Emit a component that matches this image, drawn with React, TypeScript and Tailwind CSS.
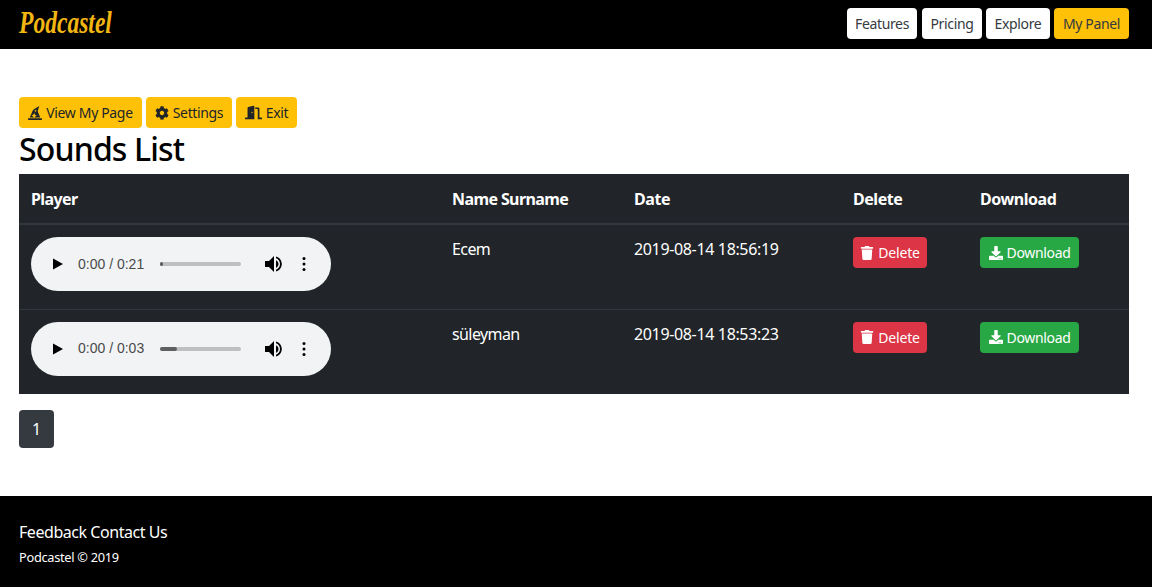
import { FaCog, FaDoorOpen, FaDownload, FaHatWizard, FaTrash } from 'react-icons/fa';

const FONT = "font-['Noto_Sans','Open_Sans',sans-serif]";

const navLinks = [
  { label: 'Features', width: 'mr-px w-[70px]', bg: 'bg-white' },
  { label: 'Pricing', width: 'w-[60px]', bg: 'bg-white' },
  { label: 'Explore', width: 'w-[64px]', bg: 'bg-white' },
  { label: 'My Panel', width: 'w-[75px]', bg: 'bg-[#ffc107]' },
];

const sounds = [
  { name: 'Ecem', date: '2019-08-14 18:56:19', time: '0:00 / 0:21', progress: 'w-[3px]' },
  { name: 'süleyman', date: '2019-08-14 18:53:23', time: '0:00 / 0:03', progress: 'w-[17px]' },
];

function AudioPlayer({ time, progress }: { time: string; progress: string }) {
  return (
    <div className="flex h-[54px] w-[300px] items-center rounded-[27px] bg-[#f1f3f4] font-['Liberation_Sans',sans-serif] text-[#4a4a4a]">
      <svg viewBox="0 0 12 14" className="ml-[21px] h-[14px] w-[12px] fill-black">
        <path d="M1 1.500v11l10-5.500z" />
      </svg>
      <span className="ml-[14px] w-[82px] text-[14px] whitespace-nowrap">{time}</span>
      <div className="h-1 w-[81px] rounded-sm bg-[#bfbfbf]">
        <div className={`h-1 rounded-sm bg-[#5f5f5f] ${progress}`} />
      </div>
      <svg viewBox="0 0 18 18" className="ml-[23px] h-[18px] w-[18px] fill-black">
        <path d="M1 6v6h4l5 5V1L5 6z" />
        <path d="M12 5.200v7.600c1.500-.7 2.500-2.200 2.500-3.800S13.500 5.900 12 5.200z" />
        <path d="M12 1.500v1.800c2.400.8 4 3 4 5.700s-1.600 4.900-4 5.700v1.800c3.400-.8 5.800-3.900 5.800-7.500S15.400 2.300 12 1.500z" />
      </svg>
      <svg viewBox="0 0 4 16" className="ml-[20px] h-4 w-1 fill-black">
        <circle cx="2" cy="2.500" r="1.500" />
        <circle cx="2" cy="8" r="1.500" />
        <circle cx="2" cy="13.500" r="1.500" />
      </svg>
    </div>
  );
}

export default function App() {
  return (
    <div className={`${FONT} min-h-[587px] bg-white text-[#212529]`}>
      {/* Navbar */}
      <nav className="flex h-[49px] items-center justify-between bg-black pr-[23px] pl-[19px]">
        <span className="mb-[2px] origin-left scale-x-[0.76] font-['Liberation_Serif',serif] text-[31px] font-bold text-[#f2b612] italic">
          Podcastel
        </span>
        <div className="mb-[2px] flex gap-1">
          {navLinks.map((link) => (
            <a
              key={link.label}
              className={`flex h-[31px] items-center justify-center rounded-[4px] text-[14px] tracking-[-0.35px] text-[#343a40] ${link.width} ${link.bg}`}
            >
              {link.label}
            </a>
          ))}
        </div>
      </nav>

      <main className="px-[19px] pt-12">
        {/* Panel actions */}
        <div className="flex gap-1">
          <a className="flex h-[31px] w-[123px] items-center justify-center gap-1 rounded-[4px] bg-[#ffc107] text-[14px] tracking-[-0.35px]">
            <FaHatWizard className="text-[14px]" /> View My Page
          </a>
          <a className="flex h-[31px] w-[86px] items-center justify-center gap-1 rounded-[4px] bg-[#ffc107] text-[14px] tracking-[-0.35px]">
            <FaCog className="text-[14px]" /> Settings
          </a>
          <a className="flex h-[31px] w-[61px] items-center justify-center gap-1 rounded-[4px] bg-[#ffc107] text-[14px] tracking-[-0.35px]">
            <FaDoorOpen className="text-[17px]" /> Exit
          </a>
        </div>

        <h1 className="h-[46px] text-[32px] leading-[42px] font-medium tracking-[-0.85px] text-black">Sounds List</h1>

        {/* Sounds table */}
        <table className="w-[1110px] table-fixed border-collapse bg-[#212529] text-left text-[16px] text-white">
          <thead>
            <tr className="h-[50px] border-b-2 border-[#32383e]">
              <th className="w-[421px] px-3 font-bold tracking-[-0.6px]">Player</th>
              <th className="w-[182px] px-3 font-bold tracking-[-0.6px]">Name Surname</th>
              <th className="w-[219px] px-3 font-bold tracking-[-0.45px]">Date</th>
              <th className="w-[127px] px-3 font-bold tracking-[-0.45px]">Delete</th>
              <th className="px-3 font-bold tracking-[-0.45px]">Download</th>
            </tr>
          </thead>
          <tbody>
            {sounds.map((sound, idx) => (
              <tr key={sound.name} className={`h-[85px] align-top ${idx > 0 ? 'border-t border-[#32383e]' : ''}`}>
                <td className="px-3 pt-3">
                  <AudioPlayer time={sound.time} progress={sound.progress} />
                </td>
                <td className="px-3 pt-3 tracking-[-0.6px]">{sound.name}</td>
                <td className="px-3 pt-3 tracking-[-0.35px]">{sound.date}</td>
                <td className="px-3 pt-3">
                  <a className="flex h-[31px] w-[74px] items-center justify-center gap-1 rounded-[4px] bg-[#dc3545] text-[14px] tracking-[-0.2px]">
                    <FaTrash className="text-[14px]" /> Delete
                  </a>
                </td>
                <td className="px-3 pt-3">
                  <a className="flex h-[31px] w-[99px] items-center justify-center gap-1 rounded-[4px] bg-[#28a745] text-[14px] tracking-[-0.35px]">
                    <FaDownload className="text-[14px]" /> Download
                  </a>
                </td>
              </tr>
            ))}
          </tbody>
        </table>

        {/* Pagination */}
        <div className="mt-4 mb-12 flex h-[38px] w-[35px] items-center justify-center rounded-[4px] bg-[#343a40] text-[16px] text-white">
          1
        </div>
      </main>

      {/* Footer */}
      <footer className="h-[91px] bg-black px-[19px] pt-6 text-white">
        <p className="text-[16px] leading-[24px] tracking-[-0.45px]">Feedback Contact Us</p>
        <p className="mt-[4px] text-[12.800px] leading-[19px] tracking-[-0.3px]">Podcastel © 2019</p>
      </footer>
    </div>
  );
}
